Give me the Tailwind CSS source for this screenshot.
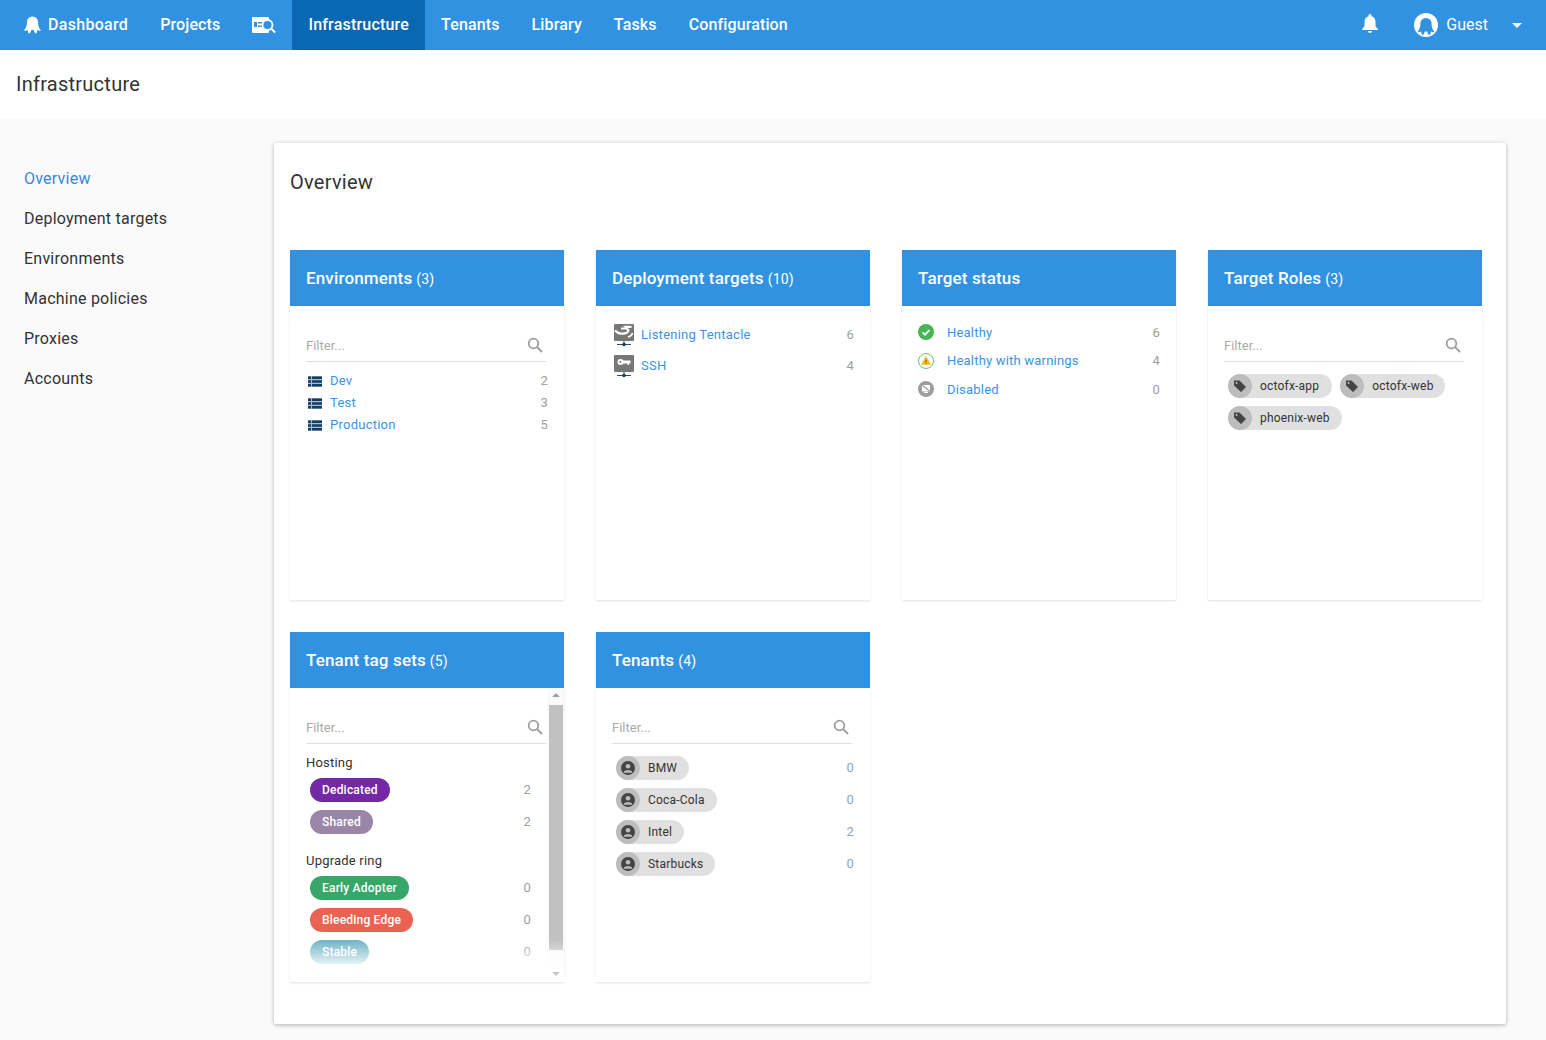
<!DOCTYPE html>
<html lang="en">
<head>
    <meta charset="UTF-8">
    <title>Infrastructure</title>
    <script src="https://cdn.jsdelivr.net/npm/@tailwindcss/browser@4"></script>
</head>
<body class="bg-[#fafafa] font-['Roboto',sans-serif] text-[#333] h-[1040px] overflow-hidden">

    <!-- nav -->
    <nav class="bg-[#3092e0] h-[50px] flex items-center text-white text-[16px] font-medium tracking-[0.13px] pl-2">
        <a class="flex items-center h-full px-4 tracking-[0.3px]">
            <svg class="w-[17px] h-[18px] mr-[7px]" viewBox="0 0 17 18" fill="#fff"><path d="M2.900 6A5.600 5.600 0 0 1 14.100 6C14.100 9 14.300 11 17 14.500C15.500 15 14.300 14.600 13.300 13.800C13.500 15 13 16.500 12 17.800C10.800 17 10 15.600 9.800 14C9.500 14 7.500 14 7.200 14C7 15.600 6.200 17 5 17.800C4 16.500 3.500 15 3.700 13.800C2.700 14.600 1.500 15 0 14.500C2.700 11 2.900 9 2.900 6Z"/></svg>
            Dashboard
        </a>
        <a class="flex items-center h-full px-4">Projects</a>
        <a class="flex items-center h-full px-4">
            <svg class="w-[24px] h-[18px]" viewBox="0 0 24 18" fill="none"><rect x="0" y="1" width="17" height="16" rx="1" fill="#fff"/><rect x="2" y="6" width="3" height="5" fill="#3092e0"/><rect x="6" y="6" width="4" height="1.500" fill="#3092e0"/><rect x="6" y="9.500" width="4" height="1.500" fill="#3092e0"/><circle cx="15.500" cy="9" r="5" fill="#3092e0" stroke="#fff" stroke-width="1.800"/><path d="M19 12.500l4.200 4" stroke="#fff" stroke-width="2"/></svg>
        </a>
        <a class="flex items-center h-full px-4 bg-[#0a67b1] tracking-[0.2px]">Infrastructure</a>
        <a class="flex items-center h-full px-4">Tenants</a>
        <a class="flex items-center h-full px-4">Library</a>
        <a class="flex items-center h-full px-4">Tasks</a>
        <a class="flex items-center h-full px-4">Configuration</a>
        <div class="ml-auto flex items-center h-full">
            <svg class="w-[16px] h-[19px] mr-[36px] -mt-[3px]" viewBox="0 0 16 19" fill="#fff"><path d="M8 0a1.500 1.500 0 0 0-1.500 1.500v.7C4 2.900 2.500 5.100 2.500 7.800v4.400L.2 15v1h15.600v-1l-2.300-2.800V7.800c0-2.700-1.500-4.900-4-5.600v-.7A1.500 1.500 0 0 0 8 0z"/><path d="M6 17h4a2 2 0 0 1-4 0z"/></svg>
            <svg class="w-[24px] h-[24px] mr-[8px]" viewBox="0 0 24 24"><circle cx="12" cy="12" r="12" fill="#fff"/><path transform="translate(3.500 4.500)" d="M2.900 6A5.600 5.600 0 0 1 14.100 6C14.100 9 14.300 11 17 14.500C15.500 15 14.300 14.600 13.300 13.800C13.500 15 13 16.500 12 17.800C10.800 17 10 15.600 9.800 14C9.500 14 7.500 14 7.200 14C7 15.600 6.200 17 5 17.800C4 16.500 3.500 15 3.700 13.800C2.700 14.600 1.500 15 0 14.500C2.700 11 2.900 9 2.900 6Z" fill="#3092e0"/></svg>
            <span class="font-normal tracking-normal">Guest</span>
            <svg class="w-[10px] h-[5px] ml-[24px] mr-[24px]" viewBox="0 0 10 5" fill="#fff"><path d="M0 0h10L5 5z"/></svg>
        </div>
    </nav>

    <!-- page title -->
    <header class="bg-white h-[69px] flex items-center px-4 pb-[2px] text-[20px] tracking-[0.25px] text-[#333]">Infrastructure</header>

    <div class="flex">
        <!-- side menu -->
        <aside class="w-[274px] shrink-0 pt-[40px] pl-6 text-[16px] tracking-[0.23px]">
            <a class="flex items-center h-10 text-[#3b87d8]">Overview</a>
            <a class="flex items-center h-10">Deployment targets</a>
            <a class="flex items-center h-10">Environments</a>
            <a class="flex items-center h-10">Machine policies</a>
            <a class="flex items-center h-10">Proxies</a>
            <a class="flex items-center h-10">Accounts</a>
        </aside>

        <!-- main paper -->
        <main class="bg-white w-[1232px] h-[881px] mt-6 rounded-[2px] shadow-[0_1px_4px_rgba(0,0,0,0.3)] pl-4">
            <h2 class="h-[107px] pt-[26px] text-[20px] leading-[26px] tracking-[0.25px] text-[#333]">Overview</h2>
            <div class="grid grid-cols-[274px_274px_274px_274px] gap-8">

                <!-- Environments -->
                <section class="h-[350px] bg-white shadow-[0_1px_2px_rgba(0,0,0,0.12)]">
                    <div class="bg-[#3092e0] h-14 flex items-center px-4 pt-[2px] text-white text-[17px] tracking-[0.15px] font-medium">Environments<span class="font-normal text-[14px] ml-[4px] pt-[1px]">(3)</span></div>
                    <div class="pt-[20px] pl-4 pr-[16px]">
                        <div class="flex items-center justify-between w-[240px] h-[36px] border-b border-[#e0e0e0] text-[13px] text-[#aaa] pt-[4px]">Filter...
                            <svg class="w-[16px] h-[16px] mr-[3px] -mt-[2px]" viewBox="0 0 16 16" fill="none" stroke="#9e9e9e" stroke-width="1.800"><circle cx="6.500" cy="6.500" r="4.800"/><path d="M10 10l5 5"/></svg>
                        </div>
                        <ul class="mt-2 text-[13px] tracking-[0.25px]">
                            <li class="flex items-center h-[22px]"><svg class="w-[14px] h-[11px] ml-[2px] mr-[8px]" viewBox="0 0 14 11"><rect width="14" height="11" fill="#a9bac9"/><path fill="#123e66" d="M0 .5h3v2.500H0zM4 .5h10v2.500H4zM0 4.200h3v2.600H0zM4 4.200h10v2.600H4zM0 8h3v2.500H0zM4 8h10v2.500H4z"/></svg><span class="text-[#3b93e8]">Dev</span><span class="ml-auto text-[#9e9e9e]">2</span></li>
                            <li class="flex items-center h-[22px]"><svg class="w-[14px] h-[11px] ml-[2px] mr-[8px]" viewBox="0 0 14 11"><rect width="14" height="11" fill="#a9bac9"/><path fill="#123e66" d="M0 .5h3v2.500H0zM4 .5h10v2.500H4zM0 4.200h3v2.600H0zM4 4.200h10v2.600H4zM0 8h3v2.500H0zM4 8h10v2.500H4z"/></svg><span class="text-[#3b93e8]">Test</span><span class="ml-auto text-[#9e9e9e]">3</span></li>
                            <li class="flex items-center h-[22px]"><svg class="w-[14px] h-[11px] ml-[2px] mr-[8px]" viewBox="0 0 14 11"><rect width="14" height="11" fill="#a9bac9"/><path fill="#123e66" d="M0 .5h3v2.500H0zM4 .5h10v2.500H4zM0 4.200h3v2.600H0zM4 4.200h10v2.600H4zM0 8h3v2.500H0zM4 8h10v2.500H4z"/></svg><span class="text-[#3b93e8]">Production</span><span class="ml-auto text-[#9e9e9e]">5</span></li>
                        </ul>
                    </div>
                </section>

                <!-- Deployment targets -->
                <section class="h-[350px] bg-white shadow-[0_1px_2px_rgba(0,0,0,0.12)]">
                    <div class="bg-[#3092e0] h-14 flex items-center px-4 pt-[2px] text-white text-[17px] tracking-[0.15px] font-medium">Deployment targets<span class="font-normal text-[14px] ml-[4px] pt-[1px]">(10)</span></div>
                    <ul class="pt-[13px] pl-4 pr-4 text-[13px] tracking-[0.25px]">
                        <li class="flex items-center h-[31px]">
                            <svg class="w-[20px] h-[24px] ml-[2px] mr-[7px] mt-[2px]" viewBox="0 0 20 24"><rect width="20" height="17" rx="1" fill="#777"/><path d="M1 6.500c3 3.500 9 4 12 2 2.500-1.800 1.500-4-2-4H7" stroke="#fff" stroke-width="2.200" fill="none"/><path d="M9 1.800h8.500v2.200H11z" fill="#fff"/><path d="M14 13c2.500-.5 4-2 4.500-4" stroke="#fff" stroke-width="1.500" fill="none"/><path d="M10 17v5M3 20.500h14" stroke="#444" stroke-width="1"/><circle cx="10" cy="20.500" r="1.800" fill="#123e66"/></svg>
                            <span class="text-[#3b93e8]">Listening Tentacle</span><span class="ml-auto text-[#9e9e9e]">6</span>
                        </li>
                        <li class="flex items-center h-[31px]">
                            <svg class="w-[20px] h-[24px] ml-[2px] mr-[7px] mt-[2px]" viewBox="0 0 20 24"><rect width="20" height="17" rx="1" fill="#777"/><circle cx="6.500" cy="7" r="3" fill="#fff"/><path d="M8 5.500h8.500V8.500h-1.500v1.500h-1.500V8.500H8z" fill="#fff"/><circle cx="6.300" cy="7" r="1" fill="#777"/><path d="M10 17v5M3 20.500h14" stroke="#444" stroke-width="1"/><circle cx="10" cy="20.500" r="1.800" fill="#123e66"/></svg>
                            <span class="text-[#3b93e8]">SSH</span><span class="ml-auto text-[#9e9e9e]">4</span>
                        </li>
                    </ul>
                </section>

                <!-- Target status -->
                <section class="h-[350px] bg-white shadow-[0_1px_2px_rgba(0,0,0,0.12)]">
                    <div class="bg-[#3092e0] h-14 flex items-center px-4 pt-[2px] text-white text-[17px] tracking-[0.15px] font-medium">Target status</div>
                    <ul class="pt-[12px] pl-4 pr-4 text-[13px] tracking-[0.2px]">
                        <li class="flex items-center h-[28.500px]">
                            <svg class="w-4 h-4 mr-[13px]" viewBox="0 0 16 16"><circle cx="8" cy="8" r="8" fill="#48b350"/><path d="M4.500 8.300l2.500 2.400 4.500-4.700" stroke="#fff" stroke-width="1.800" fill="none"/></svg>
                            <span class="text-[#3b93e8]">Healthy</span><span class="ml-auto text-[#9e9e9e]">6</span>
                        </li>
                        <li class="flex items-center h-[28.500px]">
                            <svg class="w-4 h-4 mr-[13px]" viewBox="0 0 16 16"><circle cx="8" cy="8" r="7.500" fill="#fff" stroke="#6cc070"/><path d="M8 3l5 8.800H3z" fill="#f5bd22"/><rect x="7.500" y="6.500" width="1" height="2.500" fill="#6b5a10"/><rect x="7.500" y="9.700" width="1" height="1" fill="#6b5a10"/></svg>
                            <span class="text-[#3b93e8]">Healthy with warnings</span><span class="ml-auto text-[#9e9e9e]">4</span>
                        </li>
                        <li class="flex items-center h-[28.500px]">
                            <svg class="w-4 h-4 mr-[13px]" viewBox="0 0 16 16"><circle cx="8" cy="8" r="8" fill="#9e9e9e"/><rect x="4" y="4" width="8" height="6.500" fill="#fff"/><path d="M4 4l8 6.500" stroke="#9e9e9e" stroke-width="1.200"/><rect x="6" y="11" width="4" height="1" fill="#fff"/></svg>
                            <span class="text-[#3b93e8]">Disabled</span><span class="ml-auto text-[#9e9e9e]">0</span>
                        </li>
                    </ul>
                </section>

                <!-- Target roles -->
                <section class="h-[350px] bg-white shadow-[0_1px_2px_rgba(0,0,0,0.12)]">
                    <div class="bg-[#3092e0] h-14 flex items-center px-4 pt-[2px] text-white text-[17px] tracking-[0.15px] font-medium">Target Roles<span class="font-normal text-[14px] ml-[4px] pt-[1px]">(3)</span></div>
                    <div class="pt-[20px] pl-4 pr-[18px]">
                        <div class="flex items-center justify-between h-[36px] border-b border-[#e0e0e0] text-[13px] text-[#aaa] pt-[4px]">Filter...
                            <svg class="w-[16px] h-[16px] mr-[3px] -mt-[2px]" viewBox="0 0 16 16" fill="none" stroke="#9e9e9e" stroke-width="1.800"><circle cx="6.500" cy="6.500" r="4.800"/><path d="M10 10l5 5"/></svg>
                        </div>
                        <div class="flex flex-wrap gap-2 mt-3 ml-1 text-[12px] tracking-[0.2px] text-[#333]">
                            <span class="flex items-center h-6 rounded-full bg-[#e0e0e0] pr-[13px]">
                                <span class="w-6 h-6 rounded-full bg-[#bdbdbd] flex items-center justify-center mr-2"><svg class="w-3 h-3" viewBox="0 0 12 12" fill="#444"><path d="M0 .5h5.500L12 7l-5 5-7-6.500zM2.500 2a1 1 0 1 0 0 2 1 1 0 0 0 0-2z"/></svg></span>octofx-app</span>
                            <span class="flex items-center h-6 rounded-full bg-[#e0e0e0] pr-[11px]">
                                <span class="w-6 h-6 rounded-full bg-[#bdbdbd] flex items-center justify-center mr-2"><svg class="w-3 h-3" viewBox="0 0 12 12" fill="#444"><path d="M0 .5h5.500L12 7l-5 5-7-6.500zM2.500 2a1 1 0 1 0 0 2 1 1 0 0 0 0-2z"/></svg></span>octofx-web</span>
                            <span class="flex items-center h-6 rounded-full bg-[#e0e0e0] pr-3">
                                <span class="w-6 h-6 rounded-full bg-[#bdbdbd] flex items-center justify-center mr-2"><svg class="w-3 h-3" viewBox="0 0 12 12" fill="#444"><path d="M0 .5h5.500L12 7l-5 5-7-6.500zM2.500 2a1 1 0 1 0 0 2 1 1 0 0 0 0-2z"/></svg></span>phoenix-web</span>
                        </div>
                    </div>
                </section>

                <!-- Tenant tag sets -->
                <section class="h-[350px] bg-white shadow-[0_1px_2px_rgba(0,0,0,0.12)] relative overflow-hidden">
                    <div class="bg-[#3092e0] h-14 flex items-center px-4 pt-[2px] text-white text-[17px] tracking-[0.15px] font-medium">Tenant tag sets<span class="font-normal text-[14px] ml-[4px] pt-[1px]">(5)</span></div>
                    <div class="pt-[20px] pl-4">
                        <div class="flex items-center justify-between w-[240px] h-[36px] border-b border-[#e0e0e0] text-[13px] text-[#aaa] pt-[4px]">Filter...
                            <svg class="w-[16px] h-[16px] mr-[3px] -mt-[2px]" viewBox="0 0 16 16" fill="none" stroke="#9e9e9e" stroke-width="1.800"><circle cx="6.500" cy="6.500" r="4.800"/><path d="M10 10l5 5"/></svg>
                        </div>
                        <div class="w-[225px] text-[12px] tracking-[0.2px]">
                            <div class="text-[13px] text-[#333] h-[18px] mt-[10px] leading-[18px]">Hosting</div>
                            <div class="flex items-center justify-between h-6 mt-[6px] pl-1"><span class="h-6 flex items-center px-3 rounded-full bg-[#7328a5] text-white font-medium">Dedicated</span><span class="text-[13px] text-[#9e9e9e]">2</span></div>
                            <div class="flex items-center justify-between h-6 mt-2 pl-1"><span class="h-6 flex items-center px-3 rounded-full bg-[#9a86a9] text-white font-medium">Shared</span><span class="text-[13px] text-[#9e9e9e]">2</span></div>
                            <div class="text-[13px] text-[#333] h-[18px] mt-[18px] leading-[18px]">Upgrade ring</div>
                            <div class="flex items-center justify-between h-6 mt-[6px] pl-1"><span class="h-6 flex items-center px-3 rounded-full bg-[#36a768] text-white font-medium">Early Adopter</span><span class="text-[13px] text-[#9e9e9e]">0</span></div>
                            <div class="flex items-center justify-between h-6 mt-2 pl-1"><span class="h-6 flex items-center px-3 rounded-full bg-[#ea6352] text-white font-medium">Bleeding Edge</span><span class="text-[13px] text-[#9e9e9e]">0</span></div>
                            <div class="flex items-center justify-between h-6 mt-2 pl-1"><span class="h-6 flex items-center px-3 rounded-full bg-[#6fb4c4] text-white font-medium">Stable</span><span class="text-[13px] text-[#9e9e9e]">0</span></div>
                        </div>
                    </div>
                    <!-- scrollbar -->
                    <div class="absolute top-14 right-0 bottom-0 w-[17px] bg-[#fafafa] flex flex-col items-center">
                        <svg class="w-[8px] h-[4px] mt-[5px]" viewBox="0 0 8 4" fill="#a3a3a3"><path d="M4 0l4 4H0z"/></svg>
                        <div class="w-[14px] h-[245px] bg-[#c1c1c1] mt-2"></div>
                    </div>
                    <!-- bottom fade -->
                    <div class="absolute left-0 right-0 bottom-0 h-[42px] bg-linear-to-b from-white/0 to-white/100 to-70%"></div>
                    <svg class="absolute right-[4px] bottom-[6px] w-[8px] h-[4px]" viewBox="0 0 8 4" fill="#c8c8c8"><path d="M0 0h8L4 4z"/></svg>
                </section>

                <!-- Tenants -->
                <section class="h-[350px] bg-white shadow-[0_1px_2px_rgba(0,0,0,0.12)]">
                    <div class="bg-[#3092e0] h-14 flex items-center px-4 pt-[2px] text-white text-[17px] tracking-[0.15px] font-medium">Tenants<span class="font-normal text-[14px] ml-[4px] pt-[1px]">(4)</span></div>
                    <div class="pt-[20px] pl-4 pr-4">
                        <div class="flex items-center justify-between w-[240px] h-[36px] border-b border-[#e0e0e0] text-[13px] text-[#aaa] pt-[4px]">Filter...
                            <svg class="w-[16px] h-[16px] mr-[3px] -mt-[2px]" viewBox="0 0 16 16" fill="none" stroke="#9e9e9e" stroke-width="1.800"><circle cx="6.500" cy="6.500" r="4.800"/><path d="M10 10l5 5"/></svg>
                        </div>
                        <ul class="mt-3 flex flex-col gap-2 pl-1 text-[12px] tracking-[0.2px] text-[#333]">
                            <li class="flex items-center justify-between h-6"><span class="flex items-center h-6 rounded-full bg-[#e0e0e0] pr-3"><span class="w-6 h-6 rounded-full bg-[#bdbdbd] flex items-center justify-center mr-2"><svg class="w-[14px] h-[14px]" viewBox="0 0 12 12"><circle cx="6" cy="6" r="6" fill="#444"/><circle cx="6" cy="4.500" r="2" fill="#bdbdbd"/><path d="M2.500 9c1-1.500 6-1.500 7 0v1h-7z" fill="#bdbdbd"/></svg></span>BMW</span><span class="text-[13px] text-[#8fa6bb]">0</span></li>
                            <li class="flex items-center justify-between h-6"><span class="flex items-center h-6 rounded-full bg-[#e0e0e0] pr-3"><span class="w-6 h-6 rounded-full bg-[#bdbdbd] flex items-center justify-center mr-2"><svg class="w-[14px] h-[14px]" viewBox="0 0 12 12"><circle cx="6" cy="6" r="6" fill="#444"/><circle cx="6" cy="4.500" r="2" fill="#bdbdbd"/><path d="M2.500 9c1-1.500 6-1.500 7 0v1h-7z" fill="#bdbdbd"/></svg></span>Coca-Cola</span><span class="text-[13px] text-[#8fa6bb]">0</span></li>
                            <li class="flex items-center justify-between h-6"><span class="flex items-center h-6 rounded-full bg-[#e0e0e0] pr-3"><span class="w-6 h-6 rounded-full bg-[#bdbdbd] flex items-center justify-center mr-2"><svg class="w-[14px] h-[14px]" viewBox="0 0 12 12"><circle cx="6" cy="6" r="6" fill="#444"/><circle cx="6" cy="4.500" r="2" fill="#bdbdbd"/><path d="M2.500 9c1-1.500 6-1.500 7 0v1h-7z" fill="#bdbdbd"/></svg></span>Intel</span><span class="text-[13px] text-[#8fa6bb]">2</span></li>
                            <li class="flex items-center justify-between h-6"><span class="flex items-center h-6 rounded-full bg-[#e0e0e0] pr-3"><span class="w-6 h-6 rounded-full bg-[#bdbdbd] flex items-center justify-center mr-2"><svg class="w-[14px] h-[14px]" viewBox="0 0 12 12"><circle cx="6" cy="6" r="6" fill="#444"/><circle cx="6" cy="4.500" r="2" fill="#bdbdbd"/><path d="M2.500 9c1-1.500 6-1.500 7 0v1h-7z" fill="#bdbdbd"/></svg></span>Starbucks</span><span class="text-[13px] text-[#8fa6bb]">0</span></li>
                        </ul>
                    </div>
                </section>

            </div>
        </main>
    </div>
</body>
</html>
